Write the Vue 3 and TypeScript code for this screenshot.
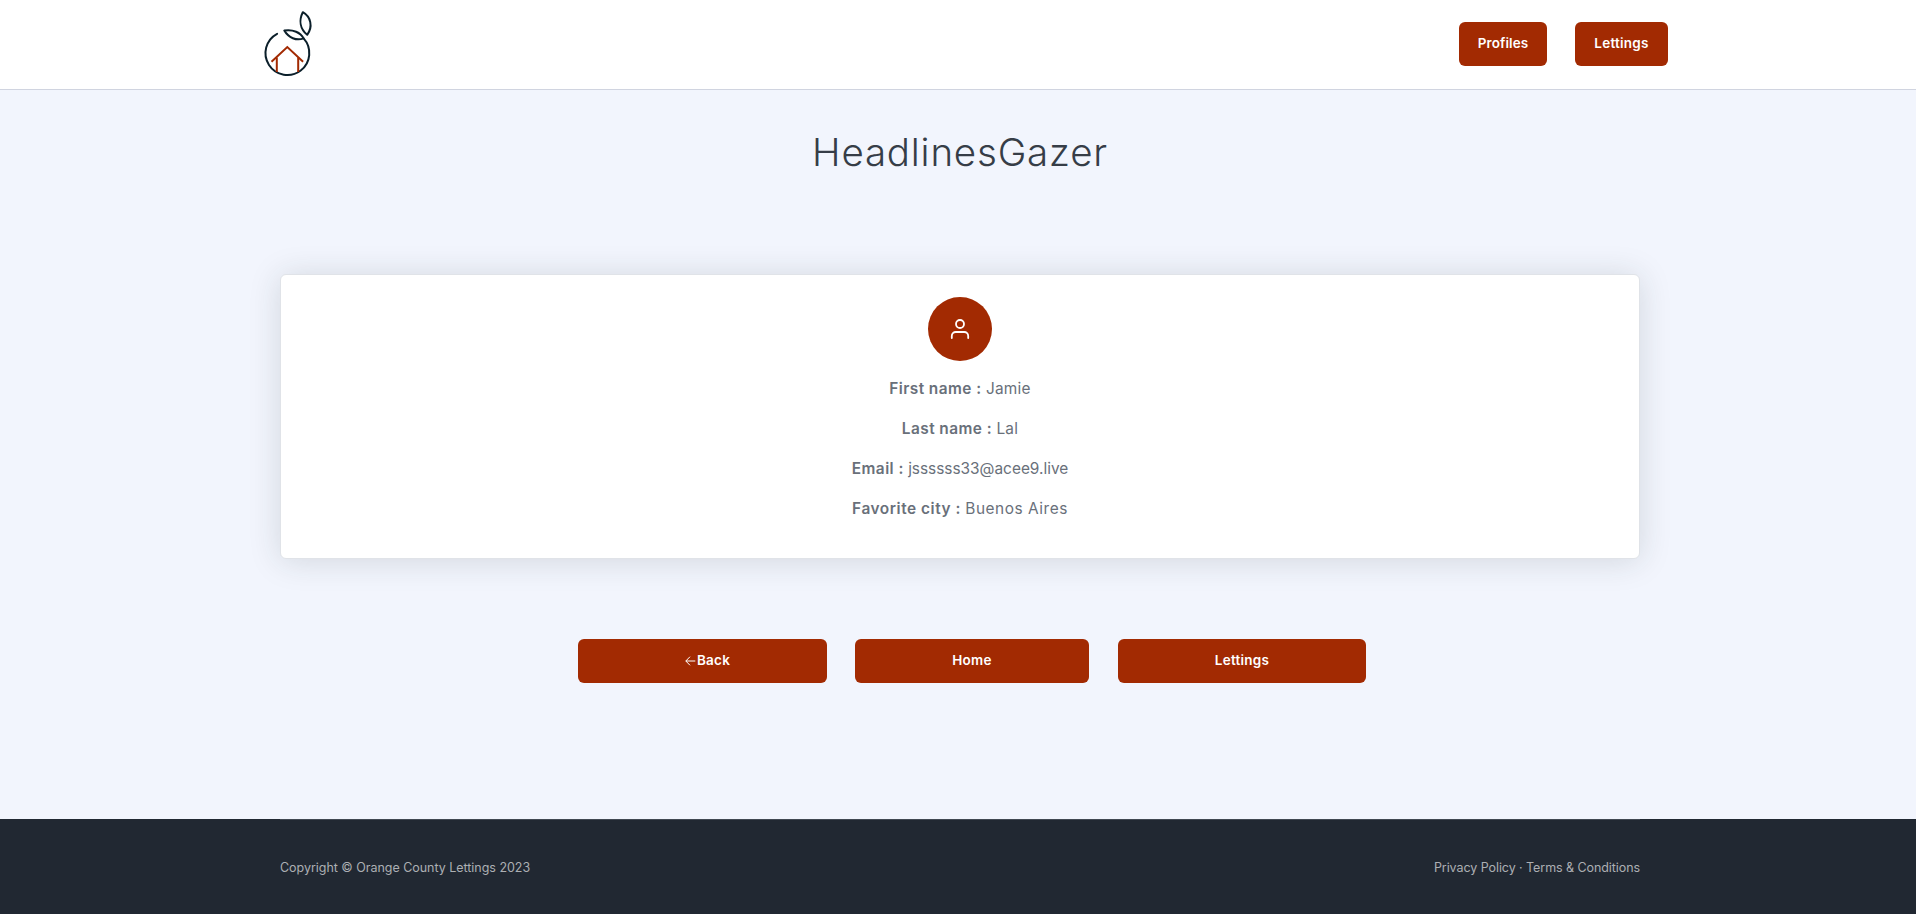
<script setup lang="ts">
interface Field { label: string; value: string; key: string }

const fields: Field[] = [
  { key: 'first', label: 'First name :', value: 'Jamie' },
  { key: 'last', label: 'Last name :', value: 'Lal' },
  { key: 'email', label: 'Email :', value: 'jssssss33@acee9.live' },
  { key: 'city', label: 'Favorite city :', value: 'Buenos Aires' },
]
</script>

<template>
  <div class="page">
    <header class="topbar">
      <a class="logo" href="#">
        <svg width="52" height="72" viewBox="0 0 52 72" fill="none" stroke-linecap="round" stroke-linejoin="round">
          <g stroke="#0b1f2a" stroke-width="2">
            <path d="M15.1 24.8A21.9 21.9 0 1 0 41.6 29.4" />
            <path d="M22.3 21.6C31 20.2 38.600 23.4 41.600 29.4C34.5 32 26.500 28.900 22.300 21.600Z" />
            <path d="M40.800 3.200C48.800 7.700 51.200 17.700 45.200 25.800C38 19.700 36.800 11.200 40.800 3.200Z" />
          </g>
          <g stroke="#a22a02" stroke-width="2" stroke-linecap="butt" stroke-linejoin="miter">
            <path d="M9.500 52.700L25.300 38L41.100 52.700" />
            <path d="M14.800 48.500V63M36.200 48.500V63" />
          </g>
        </svg>
      </a>
      <nav class="nav">
        <a class="btn profiles" href="#">Profiles</a>
        <a class="btn lettings" href="#">Lettings</a>
      </nav>
    </header>

    <main class="content">
      <h1 class="title">HeadlinesGazer</h1>
      <section class="card">
        <div class="avatar">
          <svg width="24" height="24" viewBox="0 0 24 24" fill="none" stroke="#fff" stroke-width="1.800" stroke-linecap="round" stroke-linejoin="round">
            <path d="M20.200 21v-2a4 4 0 0 0-4-4H7.800a4 4 0 0 0-4 4v2" />
            <circle cx="12" cy="7" r="4" />
          </svg>
        </div>
        <p v-for="f in fields" :key="f.key" class="field" :class="f.key">
          <strong>{{ f.label }}</strong> <span>{{ f.value }}</span>
        </p>
      </section>
      <div class="actions">
        <a class="btn back" href="#">
          <svg width="11" height="10" viewBox="0 0 11 10" fill="none" stroke="#fff">
            <path d="M5 .7L.8 5L5 9.300M.8 5H10.300" />
          </svg>Back</a>
        <a class="btn home" href="#">Home</a>
        <a class="btn more" href="#">Lettings</a>
      </div>
    </main>

    <footer class="footer">
      <div class="footer-inner">
        <span class="copy">Copyright © Orange County Lettings 2023</span>
        <span class="legal">Privacy Policy · Terms &amp; Conditions</span>
      </div>
    </footer>
  </div>
</template>

<style>
body { background: #f2f6fe; }
</style>

<style scoped>
.page {
  height: 914px;
  display: flex;
  flex-direction: column;
  overflow: hidden;
  background: #f2f5fd;
  color: #69707a;
  font-family: Inter, Lato, sans-serif;
  font-size: 15.4px;
}
.page * { box-sizing: border-box; }
a { color: inherit; text-decoration: none; }
.topbar {
  height: 90px;
  flex: none;
  display: flex;
  justify-content: space-between;
  align-items: flex-start;
  padding: 0 248px 0 262px;
  background: #fff;
  border-bottom: 1px solid #d0d4e0;
}
.logo { padding-top: 9px; height: 81px; }
.logo svg { display: block; }
.nav { display: flex; gap: 28px; padding-top: 22px; }
.btn {
  height: 44px;
  display: flex;
  align-items: center;
  justify-content: center;
  padding-bottom: 2px;
  border-radius: 6px;
  background: #a22a02;
  color: #fff;
  font-size: 13.5px;
  font-weight: 600;
  letter-spacing: 0.25px;
}
.profiles { width: 88px; letter-spacing: 0.1px; }
.lettings { width: 93px; }
.content { flex: 1; padding: 0 276px 0 280px; }
.title {
  margin: 0;
  padding-top: 38px;
  height: 184px;
  font-size: 38.5px;
  line-height: 48px;
  font-weight: 300;
  text-align: center;
  color: #363d47;
  letter-spacing: 0.8px;
}
.card {
  height: 285px;
  padding: 22px 0 0;
  display: flex;
  flex-direction: column;
  align-items: center;
  background: #fff;
  border: 1px solid #e0e3e8;
  border-radius: 6px;
  box-shadow: 0 2px 32px rgba(33, 48, 50, 0.15);
}
.avatar {
  width: 64px;
  height: 64px;
  margin-bottom: 16px;
  display: flex;
  align-items: center;
  justify-content: center;
  border-radius: 50%;
  background: #a22a02;
}
.field { margin: 0 0 16px; line-height: 24px; white-space: nowrap; }
.field strong { font-weight: 600; letter-spacing: 0.45px; }
.first span, .last span { letter-spacing: 0.25px; }
.city strong { letter-spacing: 0.55px; }
.city span { letter-spacing: 0.55px; }
.actions { display: flex; padding: 80px 0 0 298px; }
.back { width: 249px; margin-right: 28px; padding-left: 10px; }
.home { width: 234px; margin-right: 29px; }
.more { width: 248px; }
.back svg { margin: 2px 1px 0 0; }
.footer {
  height: 95px;
  flex: none;
  padding: 0 276px 0 280px;
  background: #212832;
  color: #acafb3;
  font-size: 12.5px;
}
.footer-inner {
  height: 95px;
  display: flex;
  justify-content: space-between;
  padding-top: 38px;
  line-height: 20px;
  border-top: 1px solid #414852;
}
.copy { letter-spacing: -0.03px; }
.legal { letter-spacing: -0.07px; }
</style>
